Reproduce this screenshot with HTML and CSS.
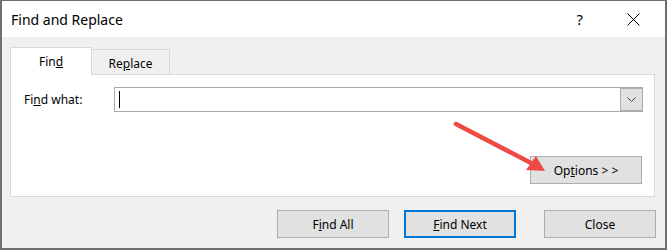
FILE: index.html
```html
<!DOCTYPE html>
<html>
<head>
<meta charset="utf-8">
<link rel="stylesheet" href="styles.css">
</head>
<body>
<div class="window">
  <div class="titlebar">
    <span class="title">Find and Replace</span>
    <span class="help">?</span>
    <svg class="close-x" width="13" height="13" viewBox="0 0 13 13"><path d="M0.5 0.5 L12.5 12.5 M12.5 0.5 L0.5 12.5" stroke="#000" stroke-width="1" fill="none"/></svg>
  </div>
  <div class="body">
    <div class="tabs">
      <div class="tab active">Fin<u>d</u></div>
      <div class="tab">Re<u>p</u>lace</div>
    </div>
    <div class="panel">
      <div class="row">
        <span class="label">Fi<u>n</u>d what:</span>
        <div class="combo">
          <span class="caret"></span>
          <span class="drop"><svg width="9" height="5" viewBox="0 0 9 5"><path d="M0.5 0.5 L4.5 4.5 L8.5 0.5" stroke="#444" stroke-width="1" fill="none"/></svg></span>
        </div>
      </div>
      <button class="btn options">Op<u>t</u>ions &gt; &gt;</button>
    </div>
    <div class="actions">
      <button class="btn">F<u>i</u>nd All</button>
      <button class="btn primary next"><u>F</u>ind Next</button>
      <button class="btn close">Close</button>
    </div>
  </div>
  <svg class="arrow" width="667" height="250" viewBox="0 0 667 250">
    <line x1="456" y1="124" x2="531" y2="163" stroke="#ef4a44" stroke-width="4.5" stroke-linecap="round"/>
    <polygon points="545,171 536,156 526,170" fill="#ef4a44"/>
  </svg>
</div>
</body>
</html>
```

FILE: styles.css
```css
* { box-sizing: border-box; }
html, body { margin: 0; padding: 0; background: #fff; }
body { font-family: "Noto Sans", "Open Sans", sans-serif; font-size: 12px; color: #000; }

.window {
  position: relative;
  width: 667px;
  height: 250px;
  border: 2px solid #6f6f6f;
  border-top-width: 1px;
  display: flex;
  flex-direction: column;
  background: #f0f0f0;
}

.titlebar {
  height: 36px;
  background: #fff;
  display: flex;
  align-items: center;
  padding-left: 9px;
  flex: none;
}
.title { font-size: 14px; color: #000; }
.help { margin-left: auto; font-size: 15px; color: #000; }
.close-x { margin-left: 44px; margin-right: 25px; }

.body {
  flex: 1;
  padding: 10px 10px 0 8px;
  display: flex;
  flex-direction: column;
}

.tabs {
  display: flex;
  height: 27px;
  position: relative;
  z-index: 1;
}
.tab {
  height: 25px;
  margin-top: 2px;
  width: 78px;
  border: 1px solid #d9d9d9;
  border-left: none;
  border-bottom: none;
  background: #f0f0f0;
  display: flex;
  align-items: center;
  justify-content: center;
  padding-top: 2px;
}
.tab.active {
  width: 82px;
  height: 28px;
  margin-top: 0;
  border-left: 1px solid #d9d9d9;
  background: #fff;
  padding-top: 0;
}

.panel {
  width: 645px;
  height: 123px;
  background: #fff;
  border: 1px solid #d9d9d9;
  padding: 12px 11px 0 13px;
  display: flex;
  flex-direction: column;
}
.row { display: flex; align-items: center; height: 25px; }
.label { width: 90px; flex: none; }
.combo {
  width: 529px;
  height: 25px;
  border: 1px solid #a9a9a9;
  display: flex;
  align-items: center;
  background: #fff;
}
.caret { width: 1px; height: 17px; background: #000; margin-left: 4px; }
.drop {
  margin-left: auto;
  width: 22px;
  height: 23px;
  background: #e1e1e1;
  border: 1px solid #adadad;
  border-right: none;
  display: flex;
  align-items: center;
  justify-content: center;
}

.btn {
  width: 112px;
  height: 28px;
  background: #e1e1e1;
  border: 1px solid #adadad;
  font-family: inherit;
  font-size: 12px;
  color: #000;
  padding: 0;
  border-radius: 0;
}
.options { align-self: flex-end; margin-top: 44px; margin-right: 1px; }

.actions {
  display: flex;
  justify-content: flex-end;
  margin-top: 13px;
  margin-right: -1px;
}
.next { margin-left: 15px; }
.close { margin-left: 28px; }
.primary { border: 2px solid #0078d7; }

.arrow {
  position: absolute;
  left: -2px;
  top: -1px;
  pointer-events: none;
  z-index: 2;
}
```
